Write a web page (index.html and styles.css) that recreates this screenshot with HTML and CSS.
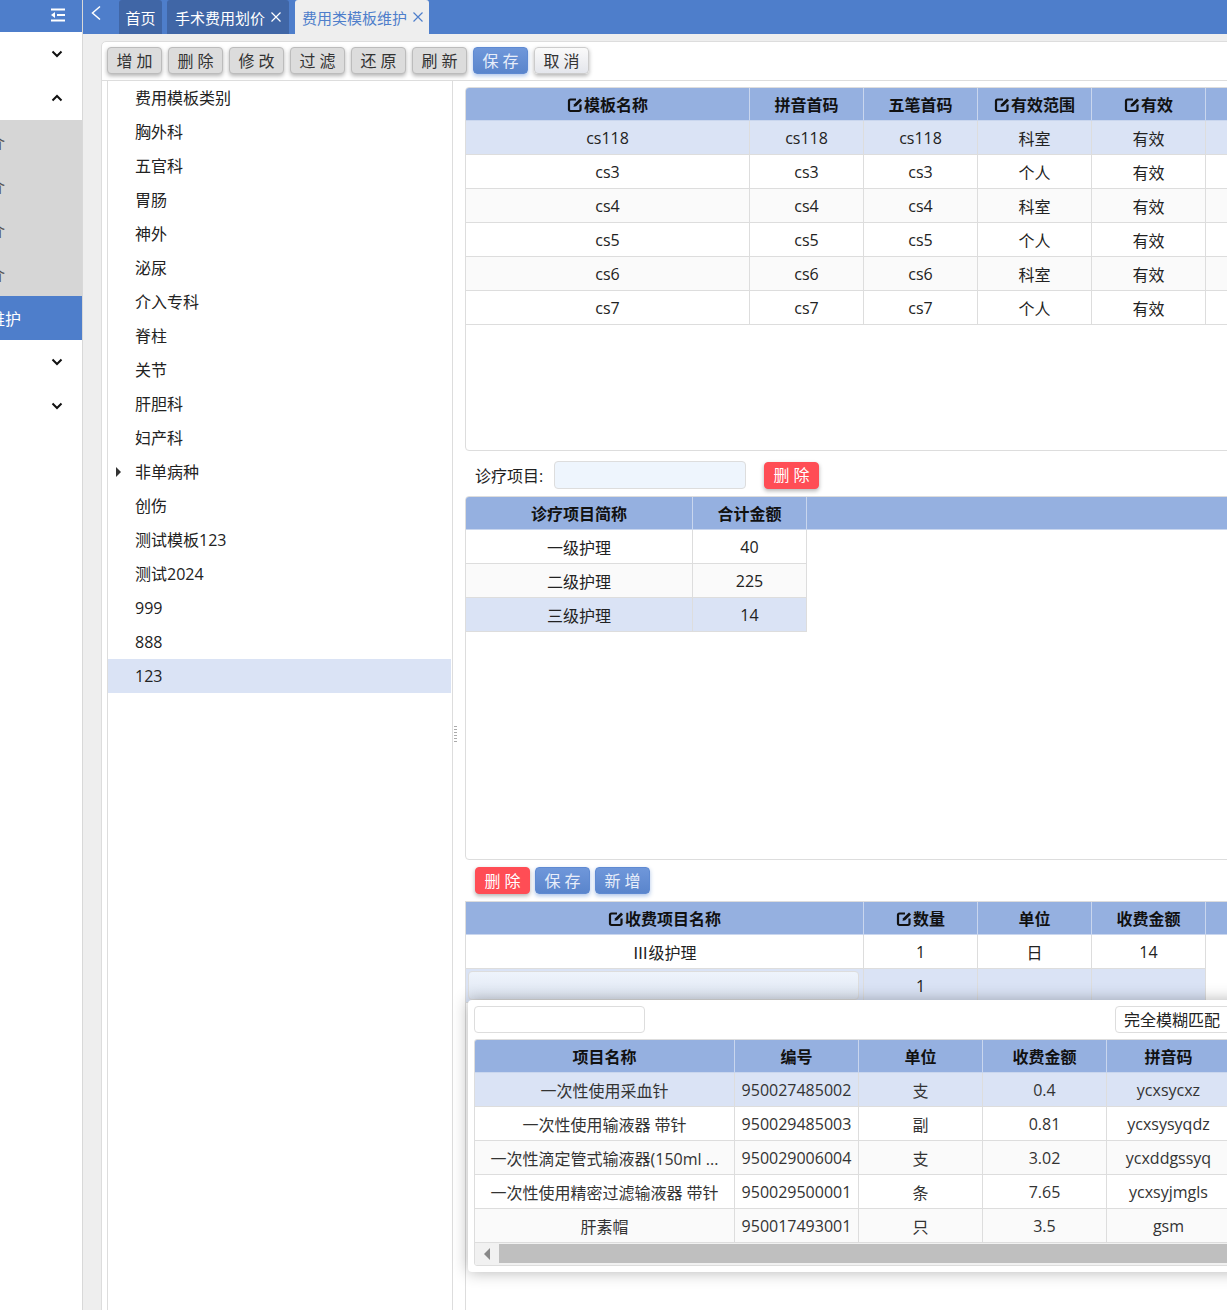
FILE: index.html
```html
<!DOCTYPE html>
<html lang="zh-CN">
<head>
<meta charset="utf-8">
<title>费用类模板维护</title>
<link rel="stylesheet" href="styles.css">
</head>
<body>
<svg class="defs" width="0" height="0"><defs>
<symbol id="edit" viewBox="0 0 16 16"><path d="M9 2.5H3.5a1.5 1.5 0 0 0-1.500 1.500v8.500a1.500 1.500 0 0 0 1.500 1.500H12a1.500 1.500 0 0 0 1.500-1.500V7.500" fill="none" stroke="currentColor" stroke-width="2.200"/><path d="M6.500 9.800l.6-2.500L13 1.500l2 2-5.800 5.800z" fill="currentColor"/></symbol>
<symbol id="chev-d" viewBox="0 0 12 8"><path d="M1.500 1.500L6 6l4.500-4.500" fill="none" stroke="currentColor" stroke-width="2"/></symbol>
<symbol id="chev-u" viewBox="0 0 12 8"><path d="M1.500 6.500L6 2l4.500 4.500" fill="none" stroke="currentColor" stroke-width="2"/></symbol>
<symbol id="close" viewBox="0 0 12 12"><path d="M1.500 1.500l9 9M10.500 1.500l-9 9" fill="none" stroke="currentColor" stroke-width="1.200"/></symbol>
</defs></svg>
<div class="app">
  <aside class="side">
    <div class="side-head">
      <svg class="burger" width="16" height="14" viewBox="0 0 16 14"><path d="M1 1.500h14M7 7h8M1 12.500h14" stroke="#fff" stroke-width="2.200" fill="none"/><path d="M1 7l4-3v6z" fill="#fff"/></svg>
    </div>
    <div class="side-row"><svg class="chev"><use href="#chev-d"/></svg></div>
    <div class="side-row"><svg class="chev"><use href="#chev-u"/></svg></div>
    <div class="side-sub"><span>费用介</span></div>
    <div class="side-sub"><span>费用介</span></div>
    <div class="side-sub"><span>费用介</span></div>
    <div class="side-sub"><span>费用介</span></div>
    <div class="side-active"><span>模板维护</span></div>
    <div class="side-row"><svg class="chev"><use href="#chev-d"/></svg></div>
    <div class="side-row"><svg class="chev"><use href="#chev-d"/></svg></div>
  </aside>
  <main class="main">
    <nav class="tabs">
      <svg class="back" width="12" height="16" viewBox="0 0 12 16"><path d="M10 1.500L2.500 8l7.500 6.500" fill="none" stroke="#fff" stroke-width="1.500"/></svg>
      <div class="tab tab-home">首页</div>
      <div class="tab tab-dark">手术费用划价<svg class="x"><use href="#close"/></svg></div>
      <div class="tab tab-on">费用类模板维护<svg class="x"><use href="#close"/></svg></div>
    </nav>
    <div class="content">
      <section class="panel">
        <div class="toolbar">
          <button class="btn">增 加</button>
          <button class="btn">删 除</button>
          <button class="btn">修 改</button>
          <button class="btn">过 滤</button>
          <button class="btn">还 原</button>
          <button class="btn">刷 新</button>
          <button class="btn btn-blue">保 存</button>
          <button class="btn btn-light">取 消</button>
        </div>
        <div class="split-body">
          <ul class="tree">
            <li>费用模板类别</li>
            <li>胸外科</li>
            <li>五官科</li>
            <li>胃肠</li>
            <li>神外</li>
            <li>泌尿</li>
            <li>介入专科</li>
            <li>脊柱</li>
            <li>关节</li>
            <li>肝胆科</li>
            <li>妇产科</li>
            <li class="has-kids">非单病种</li>
            <li>创伤</li>
            <li>测试模板123</li>
            <li>测试2024</li>
            <li>999</li>
            <li>888</li>
            <li class="on">123</li>
          </ul>
          <div class="splitter"><i></i></div>
          <div class="right">
            <div class="box box-fixed">
              <table class="grid t1">
                <thead><tr>
                  <th><svg class="ed"><use href="#edit"/></svg>模板名称</th><th>拼音首码</th><th>五笔首码</th>
                  <th><svg class="ed"><use href="#edit"/></svg>有效范围</th><th><svg class="ed"><use href="#edit"/></svg>有效</th><th></th>
                </tr></thead>
                <tbody>
                  <tr class="sel"><td>cs118</td><td>cs118</td><td>cs118</td><td>科室</td><td>有效</td><td></td></tr>
                  <tr><td>cs3</td><td>cs3</td><td>cs3</td><td>个人</td><td>有效</td><td></td></tr>
                  <tr class="alt"><td>cs4</td><td>cs4</td><td>cs4</td><td>科室</td><td>有效</td><td></td></tr>
                  <tr><td>cs5</td><td>cs5</td><td>cs5</td><td>个人</td><td>有效</td><td></td></tr>
                  <tr class="alt"><td>cs6</td><td>cs6</td><td>cs6</td><td>科室</td><td>有效</td><td></td></tr>
                  <tr><td>cs7</td><td>cs7</td><td>cs7</td><td>个人</td><td>有效</td><td></td></tr>
                </tbody>
              </table>
            </div>
            <div class="filter">
              <label class="filter-label">诊疗项目:</label>
              <input class="inp inp-tint" type="text">
              <button class="btn btn-red">删 除</button>
            </div>
            <div class="box box-fixed">
              <table class="grid t2">
                <thead><tr><th>诊疗项目简称</th><th>合计金额</th><th class="fill"></th></tr></thead>
                <tbody>
                  <tr><td>一级护理</td><td>40</td></tr>
                  <tr class="alt"><td>二级护理</td><td>225</td></tr>
                  <tr class="sel"><td>三级护理</td><td>14</td></tr>
                </tbody>
              </table>
            </div>
            <div class="actions">
              <button class="btn btn-red">删 除</button>
              <button class="btn btn-blue">保 存</button>
              <button class="btn btn-blue">新 增</button>
            </div>
            <div class="box box-grow">
              <table class="grid t3">
                <thead><tr>
                  <th><svg class="ed"><use href="#edit"/></svg>收费项目名称</th><th><svg class="ed"><use href="#edit"/></svg>数量</th><th>单位</th><th>收费金额</th><th class="fill"></th>
                </tr></thead>
                <tbody>
                  <tr><td>Ⅲ级护理</td><td>1</td><td>日</td><td>14</td></tr>
                  <tr class="sel"><td class="edit-cell"><input class="inp inp-edit" type="text"></td><td>1</td><td></td><td></td></tr>
                </tbody>
              </table>
              <div class="popup">
                <div class="popup-top">
                  <input class="inp inp-search" type="text">
                  <div class="match">完全模糊匹配</div>
                </div>
                <div class="popup-table">
                  <table class="grid t4">
                    <thead><tr><th>项目名称</th><th>编号</th><th>单位</th><th>收费金额</th><th>拼音码</th><th>五笔码</th></tr></thead>
                    <tbody>
                      <tr class="sel"><td>一次性使用采血针</td><td>950027485002</td><td>支</td><td>0.4</td><td>ycxsycxz</td><td>gunwesrq</td></tr>
                      <tr><td>一次性使用输液器 带针</td><td>950029485003</td><td>副</td><td>0.81</td><td>ycxsysyqdz</td><td>gunwelqkq</td></tr>
                      <tr class="alt"><td class="ell">一次性滴定管式输液器(150ml ...</td><td>950029006004</td><td>支</td><td>3.02</td><td>ycxddgssyq</td><td>gunipgr</td></tr>
                      <tr><td>一次性使用精密过滤输液器 带针</td><td>950029500001</td><td>条</td><td>7.65</td><td>ycxsyjmgls</td><td>gunwecpfiy</td></tr>
                      <tr class="alt"><td>肝素帽</td><td>950017493001</td><td>只</td><td>3.5</td><td>gsm</td><td>egmh</td></tr>
                    </tbody>
                  </table>
                  <div class="hscroll">
                    <div class="hs-btn"><i></i></div>
                    <div class="hs-thumb"></div>
                  </div>
                </div>
              </div>
            </div>
          </div>
        </div>
      </section>
    </div>
  </main>
</div>
</body>
</html>
```
FILE: styles.css
```css
* { box-sizing: border-box; }
html, body { margin: 0; padding: 0; height: 1310px; overflow: hidden; }
body { font-family: "Open Sans", "Noto Sans CJK SC", sans-serif; font-size: 16px; color: #222; background: #eee; }
.defs { position: absolute; }

.app { display: flex; height: 1310px; }

/* sidebar */
.side { width: 83px; flex: none; background: #fff; border-right: 1px solid #d8d8d8; overflow: hidden; }
.side-head { height: 32px; background: #4e7ecb; display: flex; align-items: center; justify-content: flex-end; padding: 0 16px 2px 0; }
.side-row { height: 44px; display: flex; align-items: center; justify-content: flex-end; padding-right: 19px; color: #111; }
.chev { width: 12px; height: 8px; }
.side-sub { height: 44px; display: flex; align-items: center; justify-content: flex-end; padding-right: 77px; background: #d6d6d6; color: #555; white-space: nowrap; }
.side-sub span, .side-active span { flex: none; }
.side-sub:first-of-type { margin-top: 0; }
.side-active { height: 44px; display: flex; align-items: center; justify-content: flex-end; padding-right: 61px; background: #4e7ecb; color: #fff; white-space: nowrap; }

/* main */
.main { flex: 1; min-width: 0; overflow: hidden; display: flex; flex-direction: column; }
.tabs { height: 34px; flex: none; background: #4e7ecb; display: flex; align-items: flex-start; padding-left: 7px; }
.back { margin-top: 5px; width: 12px; flex: none; margin-right: 17px; }
.tab { height: 34px; display: flex; align-items: center; font-size: 15px; color: #fff; white-space: nowrap; }
.tab-home { width: 43px; justify-content: center; background: #4066a6; border-radius: 3px 3px 0 0; margin-right: 5px; }
.tab-dark { width: 122px; padding-left: 8px; background: #4066a6; border-radius: 3px 3px 0 0; margin-right: 6px; }
.tab-on { width: 134px; padding-left: 7px; background: #eee; color: #4e7ecb; border-radius: 3px 3px 0 0; }
.x { width: 12px; height: 12px; margin-left: 5px; flex: none; }

.content { flex: 1; min-height: 0; padding: 7px 0 0 18px; }
.panel { width: 1300px; height: 1400px; background: #fff; border: 1px solid #ddd; border-radius: 5px 0 0 0; display: flex; flex-direction: column; }

/* buttons */
.toolbar { height: 38px; flex: none; display: flex; gap: 6px; padding: 5px 0 0 5px; }
.btn { height: 27px; width: 55px; padding: 0; flex: none; font: inherit; font-size: 16px; line-height: 24px; color: #333; background: #dcdcdc; border: 1px solid #bcbcbc; border-radius: 4px; box-shadow: 0 2px 4px rgba(0, 0, 0, .3); white-space: pre; }
.btn-blue { color: #e8eefa; background: linear-gradient(#6f97da, #5a85cc); border-color: #5f8ad2; box-shadow: 0 2px 4px rgba(78, 126, 203, .45); }
.btn-light { color: #333; background: linear-gradient(#fafafa, #e4e6ec); border-color: #ccc; }
.btn-red { color: #fff; background: #ff4d55; border-color: #ff4d55; }

/* split */
.split-body { flex: 1; min-height: 0; display: flex; border-top: 1px solid #ddd; margin-left: 0; padding-left: 5px; }
.tree { width: 346px; flex: none; list-style: none; margin: 0; padding: 0; border-left: 1px solid #ddd; border-right: 1px solid #ddd; }
.tree li { position: relative; height: 34px; line-height: 34px; padding-left: 27px; color: #222; margin-right: 1px; }
.tree li.on { background: #dae3f5; }
.tree li.has-kids::before { content: ""; position: absolute; left: 8px; top: 12px; border-left: 5px solid #333; border-top: 5px solid transparent; border-bottom: 5px solid transparent; }
.splitter { width: 12px; flex: none; position: relative; }
.splitter i { position: absolute; left: 1px; top: 645px; width: 3px; height: 16px; background: repeating-linear-gradient(#aaa 0 1px, transparent 1px 3px); }

.right { flex: 1; min-width: 0; padding-top: 6px; display: flex; flex-direction: column; }
.box { border: 1px solid #ddd; background: #fff; position: relative; }
.box-fixed { height: 364px; border-radius: 4px; flex: none; overflow: hidden; }
.box-grow { flex: 1; min-height: 0; }

.filter { height: 45px; flex: none; display: flex; align-items: center; padding: 3px 0 0 10px; }
.filter-label { width: 79px; flex: none; }
.inp { display: block; border: 1px solid #ddd; border-radius: 4px; background: #fff; outline: none; padding: 0; }
.inp-tint { width: 192px; height: 28px; background: #eef5fd; margin-right: 18px; }
.actions { height: 41px; flex: none; display: flex; gap: 5px; padding: 7px 0 0 10px; }

/* grids */
.grid { border-collapse: separate; border-spacing: 0; table-layout: fixed; color: #222; }
.grid th { height: 33px; padding: 0; background: #95b0e0; border-right: 1px solid #c9d6ee; border-bottom: 1px solid #c9d6ee; font-weight: 700; color: #111; white-space: nowrap; text-align: center; }
.grid td { height: 34px; padding: 0; border-right: 1px solid #ddd; border-bottom: 1px solid #ddd; text-align: center; white-space: nowrap; overflow: hidden; background: #fff; }
.grid .alt td { background: #fafafa; }
.grid .sel td { background: #dae3f5; }
.grid th.fill { border-right: 0; }
.ed { width: 16px; height: 16px; vertical-align: -2px; margin-right: 1px; }

.t1 { width: 900px; }
.t1 th:nth-child(1) { width: 284px; }
.t1 th:nth-child(n+2):nth-child(-n+5) { width: 114px; }
.t2 { width: 900px; }
.t2 th:nth-child(1) { width: 227px; }
.t2 th:nth-child(2) { width: 114px; }
.t3 { width: 900px; }
.t3 th:nth-child(1) { width: 398px; }
.t3 th:nth-child(n+2):nth-child(-n+4) { width: 114px; }
.edit-cell { text-align: left; }
.inp-edit { width: 391px; height: 29px; margin: 0 0 0 2px; background: linear-gradient(#eef4fc, #dfe6f2); }

/* lookup popup */
.popup { position: absolute; left: 2px; top: 98px; width: 900px; height: 272px; background: #fff; border-radius: 4px; box-shadow: 0 0 16px rgba(0, 0, 0, .3); padding: 6px; }
.popup-top { height: 33px; display: flex; align-items: flex-start; }
.inp-search { width: 171px; height: 27px; margin-right: 470px; }
.match { width: 120px; height: 27px; flex: none; border: 1px solid #ddd; border-radius: 4px; padding-left: 8px; font-size: 16px; line-height: 27px; color: #222; white-space: nowrap; }
.popup-table { border: 1px solid #ddd; border-radius: 3px; width: 880px; overflow: hidden; }
.t4 { width: 880px; }
.t4 th:nth-child(1) { width: 239px; }
.t4 th:nth-child(n+2):nth-child(-n+6) { width: 114px; }
.t4 td { color: #333; }
.hscroll { height: 22px; display: flex; background: #f1f1f1; }
.hs-btn { width: 24px; flex: none; display: flex; align-items: center; justify-content: center; }
.hs-btn i { border-right: 6px solid #888; border-top: 6px solid transparent; border-bottom: 6px solid transparent; }
.hs-thumb { flex: 1; background: #bfbfbf; margin: 1px 0 2px; }
```
